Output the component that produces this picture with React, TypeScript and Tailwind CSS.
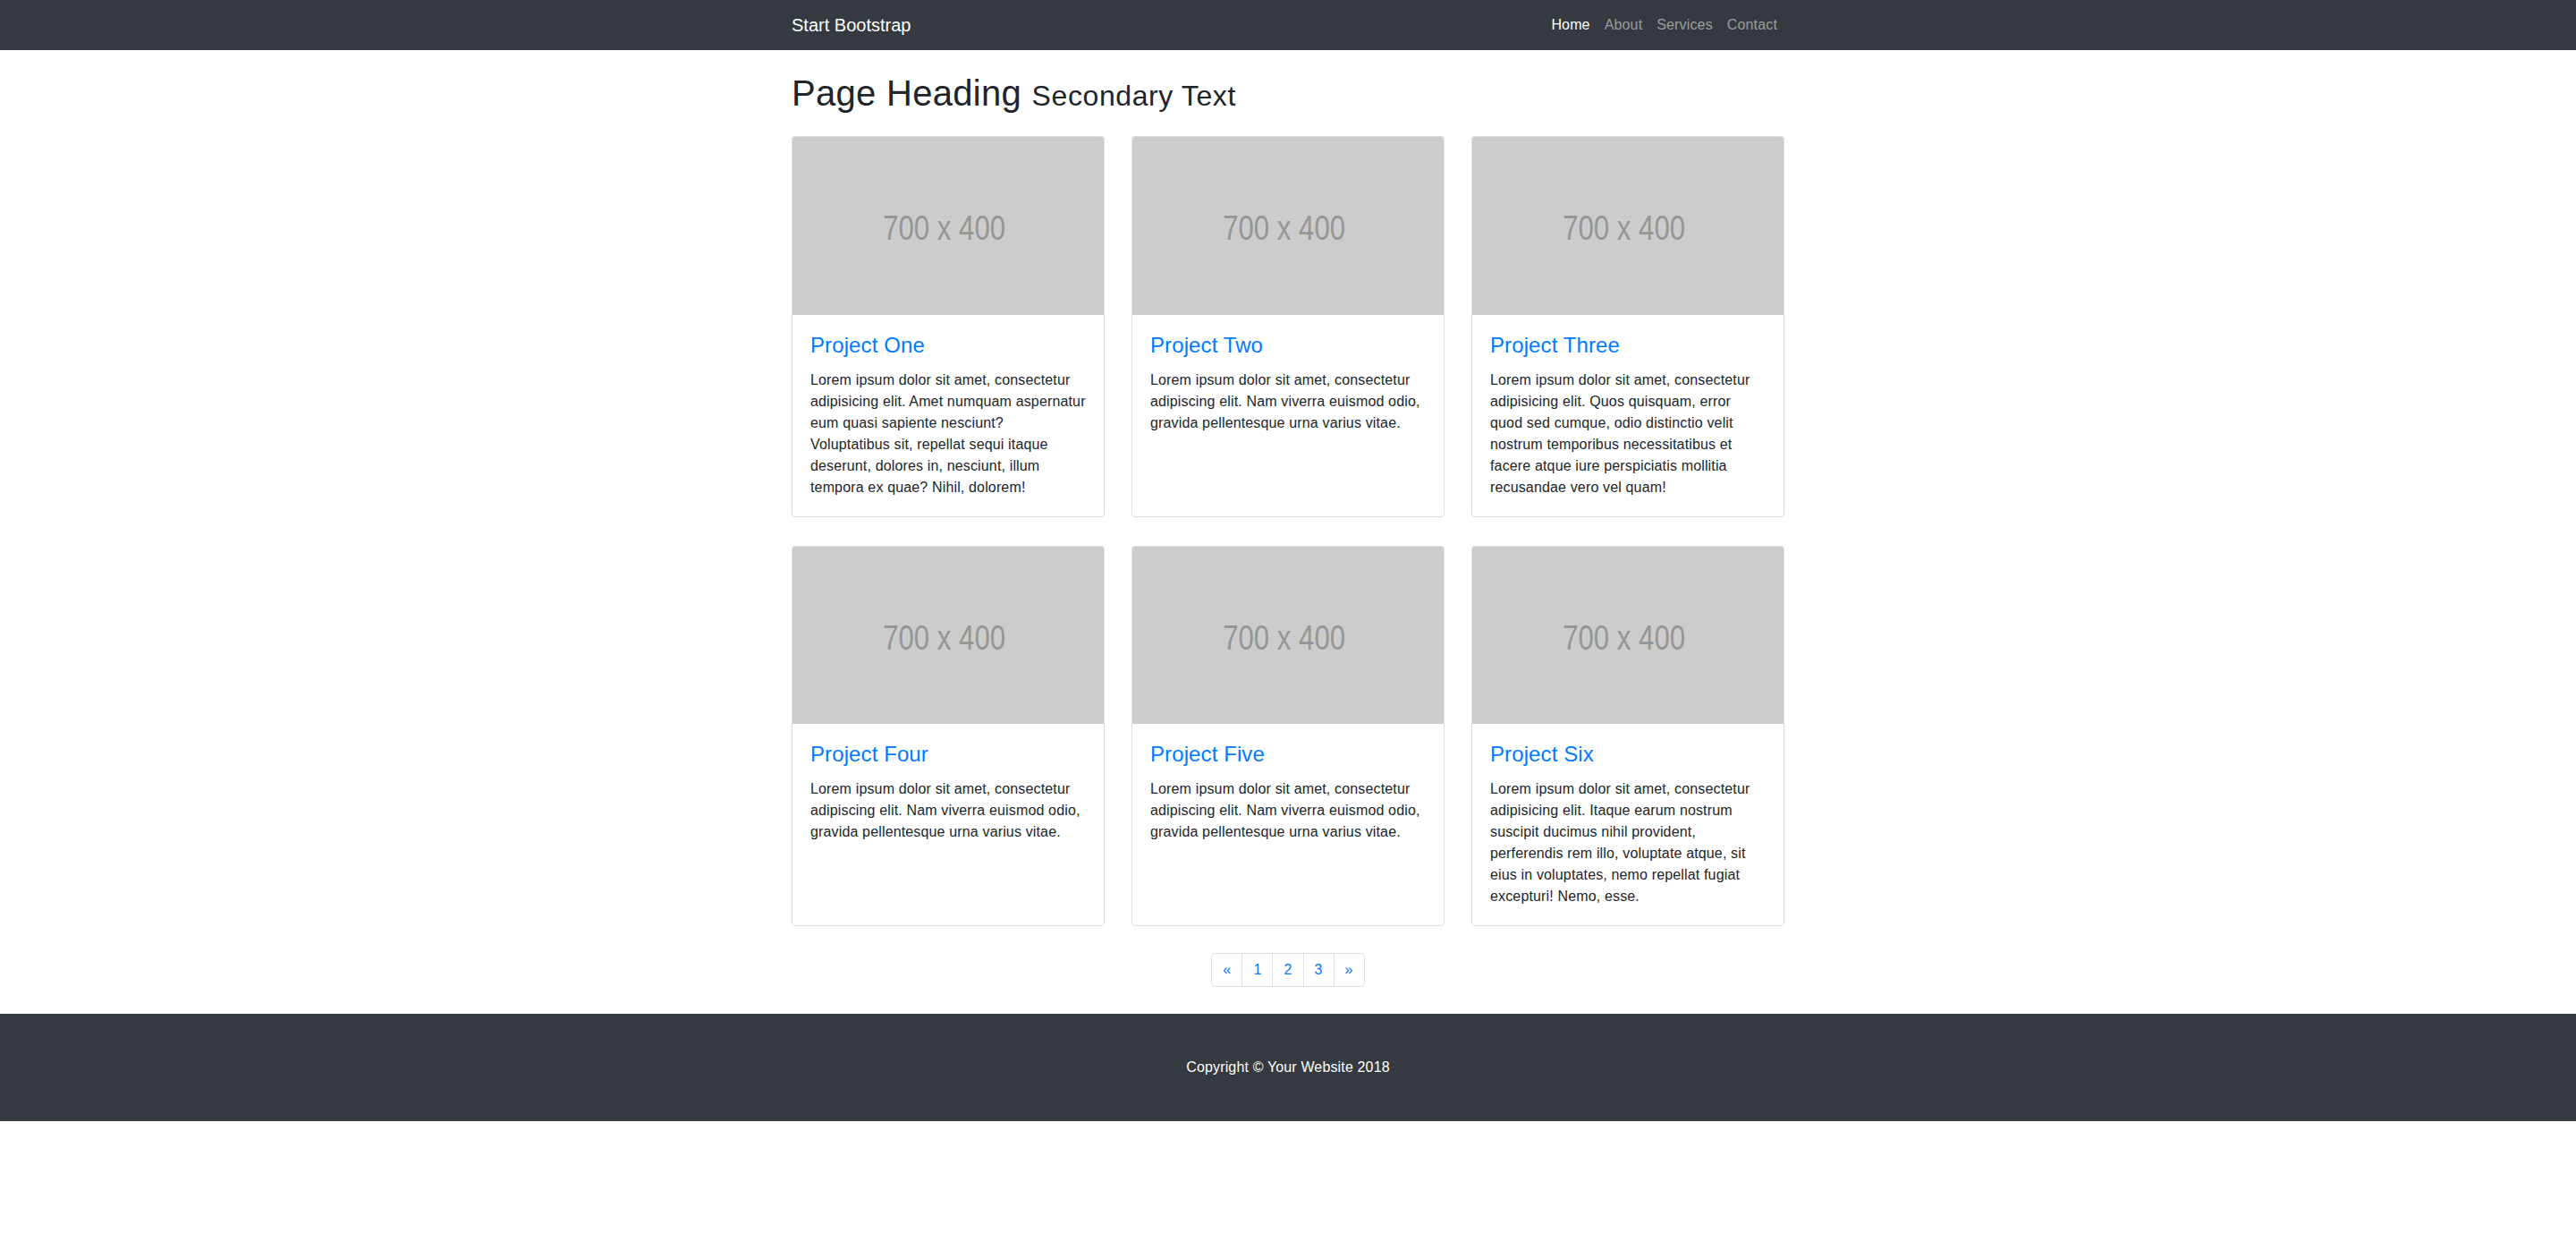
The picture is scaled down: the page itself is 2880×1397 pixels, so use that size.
import React from 'react'

const navLinks = [
  { label: 'Home', active: true },
  { label: 'About', active: false },
  { label: 'Services', active: false },
  { label: 'Contact', active: false },
]

const shortText =
  'Lorem ipsum dolor sit amet, consectetur adipiscing elit. Nam viverra euismod odio, gravida pellentesque urna varius vitae.'

const projects = [
  {
    title: 'Project One',
    text: 'Lorem ipsum dolor sit amet, consectetur adipisicing elit. Amet numquam aspernatur eum quasi sapiente nesciunt? Voluptatibus sit, repellat sequi itaque deserunt, dolores in, nesciunt, illum tempora ex quae? Nihil, dolorem!',
  },
  { title: 'Project Two', text: shortText },
  {
    title: 'Project Three',
    text: 'Lorem ipsum dolor sit amet, consectetur adipisicing elit. Quos quisquam, error quod sed cumque, odio distinctio velit nostrum temporibus necessitatibus et facere atque iure perspiciatis mollitia recusandae vero vel quam!',
  },
  { title: 'Project Four', text: shortText },
  { title: 'Project Five', text: shortText },
  {
    title: 'Project Six',
    text: 'Lorem ipsum dolor sit amet, consectetur adipisicing elit. Itaque earum nostrum suscipit ducimus nihil provident, perferendis rem illo, voluptate atque, sit eius in voluptates, nemo repellat fugiat excepturi! Nemo, esse.',
  },
]

const pages = ['«', '1', '2', '3', '»']

export default function App() {
  return (
    <div className="min-h-[1397px] bg-white font-['Liberation_Sans',Arial,sans-serif] text-[16px] leading-[1.5] tracking-[0.15px] text-[#212529]">
      {/* Navbar */}
      <nav className="bg-[#343a40]">
        <div className="mx-auto flex h-[56px] w-[1110px] items-center justify-between">
          <a className="text-[20px] leading-[30px] tracking-normal text-white">Start Bootstrap</a>
          <ul className="flex">
            {navLinks.map((link) => (
              <li key={link.label}>
                <a className={`block px-2 py-2 ${link.active ? 'text-white' : 'text-white/50'}`}>
                  {link.label}
                </a>
              </li>
            ))}
          </ul>
        </div>
      </nav>

      <div className="mx-auto w-[1110px]">
        {/* Page Heading */}
        <h1 className="my-6 text-[40px] leading-[1.2] font-medium tracking-[0.3px]">
          Page Heading{' '}
          <small className="text-[32px] font-normal tracking-[0.6px]">Secondary Text</small>
        </h1>

        {/* Projects Grid */}
        <div className="grid grid-cols-3 gap-x-[30px] gap-y-[32px]">
          {projects.map((project) => (
            <div
              key={project.title}
              className="flex flex-col rounded-[4px] border border-black/[0.125] bg-white"
            >
              <div className="flex aspect-[7/4] w-full items-center justify-center overflow-hidden rounded-t-[3px] bg-[#cccccc]">
                <span className="translate-y-[2px] -translate-x-[4px] scale-x-[0.8] text-[39px] leading-none tracking-normal text-[#969696]">
                  700 x 400
                </span>
              </div>
              <div className="flex-1 p-5">
                <h4 className="mb-3 text-[24px] leading-[1.2] font-medium tracking-[0.1px] text-[#007bff]">
                  {project.title}
                </h4>
                <p>{project.text}</p>
              </div>
            </div>
          ))}
        </div>

        {/* Pagination */}
        <ul className="mt-[30px] mb-[30px] flex justify-center">
          {pages.map((page, index) => (
            <li key={page}>
              <a
                className={`-ml-px block border border-[#dee2e6] bg-white px-3 py-2 leading-[1.25] text-[#007bff] ${
                  index === 0 ? 'ml-0 rounded-l-[4px]' : ''
                } ${index === pages.length - 1 ? 'rounded-r-[4px]' : ''}`}
              >
                {page}
              </a>
            </li>
          ))}
        </ul>
      </div>

      {/* Footer */}
      <footer className="bg-[#343a40] py-12">
        <p className="text-center text-white">Copyright © Your Website 2018</p>
      </footer>
    </div>
  )
}
